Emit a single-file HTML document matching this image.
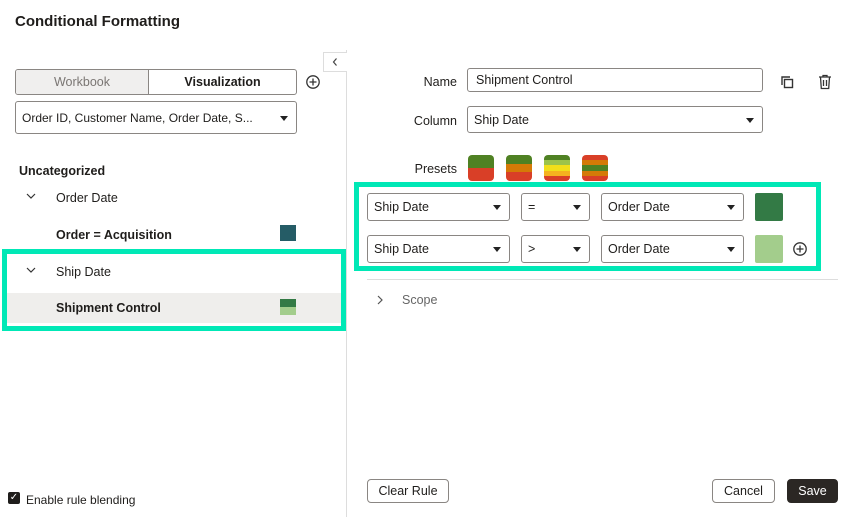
<!DOCTYPE html>
<html><head><style>
*{box-sizing:border-box;margin:0;padding:0}
body{width:857px;height:517px;background:#fff;font-family:"Liberation Sans",sans-serif;color:#1f1d1b;position:relative;overflow:hidden;font-size:12.5px}
.a{position:absolute}
.sel{position:absolute;border:1px solid #8a8683;border-radius:3px;background:#fff;padding-left:6px;display:flex;align-items:center;font-size:12.5px}
.sel:after{content:"";position:absolute;right:8px;top:50%;margin-top:-2px;border-left:4px solid transparent;border-right:4px solid transparent;border-top:5px solid #222}
.sel.n:after{display:none}
.lbl{position:absolute;text-align:right;width:100px;font-size:12.5px}
.sw{position:absolute;width:26px;height:26px;border-radius:4px;overflow:hidden;display:flex;flex-direction:column}
.sw div{flex:1}
.btn{position:absolute;border:1px solid #8a8683;border-radius:4px;display:flex;align-items:center;justify-content:center;font-size:12.5px;background:#fff}
</style></head><body>
<div class="a" style="left:15px;top:13px;font-size:15px;font-weight:bold">Conditional Formatting</div>
<div class="a" style="left:346px;top:50px;width:1px;height:467px;background:#ddd"></div>
<div class="a" style="left:323px;top:52px;width:24px;height:20px;border:1px solid #ddd;border-right:none;background:#fff"></div>
<svg class="a" style="left:331px;top:57px" width="8" height="10" viewBox="0 0 8 10"><path d="M5.5 1.5L2.5 5l3 3.5" fill="none" stroke="#444" stroke-width="1.2"/></svg>

<div class="a" style="left:15px;top:69px;width:282px;height:26px;border:1px solid #8a8683;border-radius:3px;display:flex;overflow:hidden">
<div style="width:133px;background:#f0efee;border-right:1px solid #8a8683;color:#7a7673;display:flex;align-items:center;justify-content:center">Workbook</div>
<div style="flex:1;display:flex;align-items:center;justify-content:center;font-weight:bold">Visualization</div></div>
<svg class="a" style="left:305px;top:74px" width="16" height="16" viewBox="0 0 16 16"><circle cx="8" cy="8" r="6.2" fill="none" stroke="#333" stroke-width="1.3"/><path d="M8 4.5v7M4.5 8h7" stroke="#333" stroke-width="1.3"/></svg>
<div class="sel" style="left:15px;top:101px;width:282px;height:33px;font-size:12px">Order ID, Customer Name, Order Date, S...</div>

<div class="a" style="left:19px;top:164px;font-weight:bold;font-size:12.5px">Uncategorized</div>
<svg class="a" style="left:26px;top:193px" width="10" height="6" viewBox="0 0 10 6"><path d="M1 1l4 4 4-4" fill="none" stroke="#333" stroke-width="1.2"/></svg>
<div class="a" style="left:56px;top:191px">Order Date</div>
<div class="a" style="left:56px;top:228px;font-weight:bold">Order = Acquisition</div>
<div class="a" style="left:280px;top:225px;width:16px;height:16px;background:#255c66"></div>

<div class="a" style="left:2px;top:249px;width:344px;height:82px;border:5px solid #00e8b6"></div>
<svg class="a" style="left:26px;top:267px" width="10" height="6" viewBox="0 0 10 6"><path d="M1 1l4 4 4-4" fill="none" stroke="#333" stroke-width="1.2"/></svg>
<div class="a" style="left:56px;top:265px">Ship Date</div>
<div class="a" style="left:7px;top:293px;width:334px;height:30px;background:#efeeec"></div>
<div class="a" style="left:56px;top:301px;font-weight:bold">Shipment Control</div>
<div class="a" style="left:280px;top:299px;width:16px;height:8px;background:#337a45"></div>
<div class="a" style="left:280px;top:307px;width:16px;height:8px;background:#a3cd8c"></div>

<div class="lbl" style="left:357px;top:75px">Name</div>
<div class="sel n" style="left:467px;top:68px;width:296px;height:24px;padding-left:8px">Shipment Control</div>
<svg class="a" style="left:779px;top:74px" width="16" height="16" viewBox="0 0 16 16"><path d="M3 11V3h8" fill="none" stroke="#333" stroke-width="1.4"/><rect x="5.5" y="5.5" width="8" height="8" fill="none" stroke="#333" stroke-width="1.4"/></svg>
<svg class="a" style="left:818px;top:74px" width="14" height="16" viewBox="0 0 14 16"><path d="M1 3h12M5 3V1.5h4V3M2.5 3l.8 11.5h7.4L11.5 3M5.5 6v6M8.5 6v6" fill="none" stroke="#333" stroke-width="1.3"/></svg>
<div class="lbl" style="left:357px;top:114px">Column</div>
<div class="sel" style="left:467px;top:106px;width:296px;height:27px">Ship Date</div>
<div class="lbl" style="left:357px;top:162px">Presets</div>
<div class="sw" style="left:468px;top:155px"><div style="background:#4f8123"></div><div style="background:#d93f27"></div></div>
<div class="sw" style="left:506px;top:155px"><div style="background:#4f8123"></div><div style="background:#d57a07"></div><div style="background:#d93f27"></div></div>
<div class="sw" style="left:544px;top:155px"><div style="background:#4f8123"></div><div style="background:#9cc34a"></div><div style="background:#f1df1a"></div><div style="background:#f5b21f"></div><div style="background:#d93f27"></div></div>
<div class="sw" style="left:582px;top:155px"><div style="background:#d93f27"></div><div style="background:#d57a07"></div><div style="background:#4f8123"></div><div style="background:#d57a07"></div><div style="background:#d93f27"></div></div>

<div class="a" style="left:354px;top:182px;width:467px;height:89px;border:5px solid #00e8b6"></div>
<div class="sel" style="left:367px;top:193px;width:143px;height:28px">Ship Date</div>
<div class="sel" style="left:521px;top:193px;width:69px;height:28px">=</div>
<div class="sel" style="left:601px;top:193px;width:143px;height:28px">Order Date</div>
<div class="a" style="left:755px;top:193px;width:28px;height:28px;background:#337a45;border-radius:2px"></div>
<div class="sel" style="left:367px;top:235px;width:143px;height:28px">Ship Date</div>
<div class="sel" style="left:521px;top:235px;width:69px;height:28px">&gt;</div>
<div class="sel" style="left:601px;top:235px;width:143px;height:28px">Order Date</div>
<div class="a" style="left:755px;top:235px;width:28px;height:28px;background:#a3cd8c;border-radius:2px"></div>
<svg class="a" style="left:792px;top:241px" width="16" height="16" viewBox="0 0 16 16"><circle cx="8" cy="8" r="6.2" fill="none" stroke="#333" stroke-width="1.3"/><path d="M8 4.5v7M4.5 8h7" stroke="#333" stroke-width="1.3"/></svg>
<div class="a" style="left:367px;top:279px;width:471px;height:1px;background:#ddd"></div>
<svg class="a" style="left:377px;top:295px" width="6" height="10" viewBox="0 0 6 10"><path d="M1 1l4 4-4 4" fill="none" stroke="#555" stroke-width="1.2"/></svg>
<div class="a" style="left:402px;top:293px;color:#666">Scope</div>

<div class="a" style="left:8px;top:492px;width:12px;height:12px;background:#1f1d1b;border-radius:2px;color:#fff;font-size:10px;line-height:12px;text-align:center">✓</div>
<div class="a" style="left:26px;top:493px;font-size:12px">Enable rule blending</div>
<div class="btn" style="left:367px;top:479px;width:82px;height:24px">Clear Rule</div>
<div class="btn" style="left:712px;top:479px;width:63px;height:24px">Cancel</div>
<div class="btn" style="left:787px;top:479px;width:51px;height:24px;background:#2b2724;border-color:#2b2724;color:#fff">Save</div>
</body></html>
